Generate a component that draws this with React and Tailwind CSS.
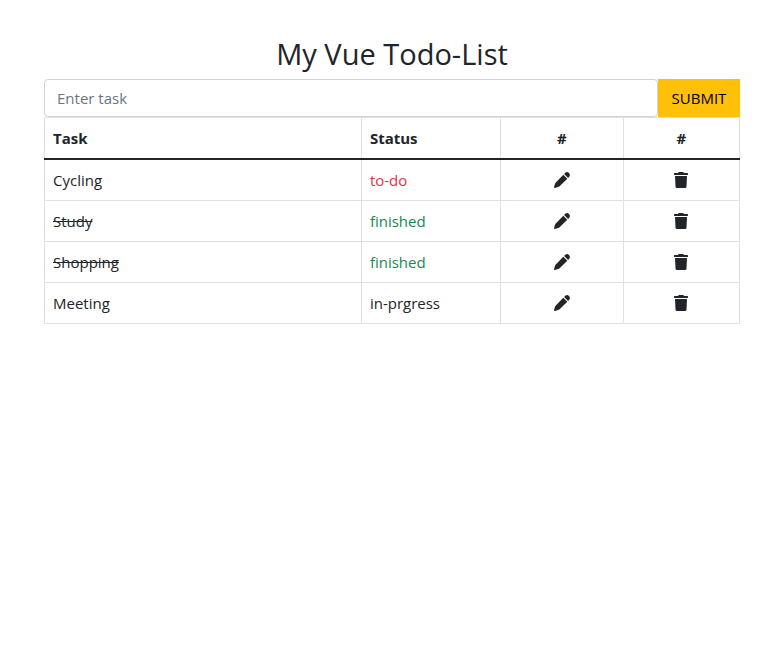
import { useState } from "react";

const tasks = [
  { name: "Cycling", status: "to-do" },
  { name: "Study", status: "finished" },
  { name: "Shopping", status: "finished" },
  { name: "Meeting", status: "in-prgress" },
];

const statusColor = {
  "to-do": "text-[#dc3545]",
  finished: "text-[#198754]",
  "in-prgress": "text-[#212529]",
};

const headCell = "border border-b-2 border-[#dee2e6] border-b-[#212529] p-2 font-bold";
const cell = "border border-[#dee2e6] p-2";
const iconButton = "flex h-6 w-full items-center justify-center";

function PenIcon() {
  return (
    <svg viewBox="0 0 16 16" className="size-4" fill="currentColor" aria-hidden="true">
      <path d="M9.3 2.7 13.3 6.7 5.6 14.2Q4.9 14.9 4 15.1L.9 16Q0 16.1 0 15.2L.9 12.1Q1.1 11.2 1.8 10.4Z" />
      <path d="M10.1 1.9 11.3.8Q13.2-.7 15 .9 16.7 2.8 15.2 4.7L14.1 5.9Z" />
    </svg>
  );
}

function TrashIcon() {
  return (
    <svg viewBox="0 0 16 16" className="size-4" fill="currentColor" aria-hidden="true">
      <path d="M5.2.6Q5.5 0 6.1 0H9.9Q10.5 0 10.8.6L11 1H14.4Q15 1 15 1.6V2.4Q15 3 14.4 3H1.6Q1 3 1 2.4V1.6Q1 1 1.6 1H5Z" />
      <path d="M2 4H14L13.5 14.5Q13.4 16 11.9 16H4.1Q2.6 16 2.5 14.5Z" />
    </svg>
  );
}

export default function App() {
  const [task, setTask] = useState("");

  return (
    <main className="bg-white pt-9 pr-[31px] pl-11 font-['Segoe_UI','Open_Sans',sans-serif] text-[15px] leading-6 text-[#212529]">
      <h1 className="pb-[7px] text-center text-[29px] leading-9 font-normal">My Vue Todo-List</h1>
      <form className="flex" onSubmit={(e) => e.preventDefault()}>
        <input
          type="text"
          aria-label="Enter task"
          placeholder="Enter task"
          value={task}
          onChange={(e) => setTask(e.target.value)}
          className="h-[38px] min-w-0 flex-1 rounded border border-[#ced4da] px-3 placeholder:text-[#6c757d]"
        />
        <button type="submit" className="h-[38px] w-[82px] bg-[#ffc107] text-center text-black">
          SUBMIT
        </button>
      </form>
      <table className="w-full table-fixed border-collapse">
        <colgroup>
          <col className="w-[45.6%]" />
          <col className="w-[20%]" />
          <col className="w-[17.7%]" />
          <col className="w-[16.7%]" />
        </colgroup>
        <thead>
          <tr>
            <th scope="col" className={headCell + " text-left"}>Task</th>
            <th scope="col" className={headCell + " text-left"}>Status</th>
            <th scope="col" className={headCell + " text-center"}>#</th>
            <th scope="col" className={headCell + " text-center"}>#</th>
          </tr>
        </thead>
        <tbody>
          {tasks.map((t) => (
            <tr key={t.name}>
              <td className={cell}>
                <span className={t.status === "finished" ? "line-through" : ""}>{t.name}</span>
              </td>
              <td className={cell}>
                <span className={statusColor[t.status]}>{t.status}</span>
              </td>
              <td className={cell}>
                <button type="button" aria-label={"Edit " + t.name} className={iconButton}>
                  <PenIcon />
                </button>
              </td>
              <td className={cell}>
                <button type="button" aria-label={"Delete " + t.name} className={iconButton}>
                  <TrashIcon />
                </button>
              </td>
            </tr>
          ))}
        </tbody>
      </table>
    </main>
  );
}
